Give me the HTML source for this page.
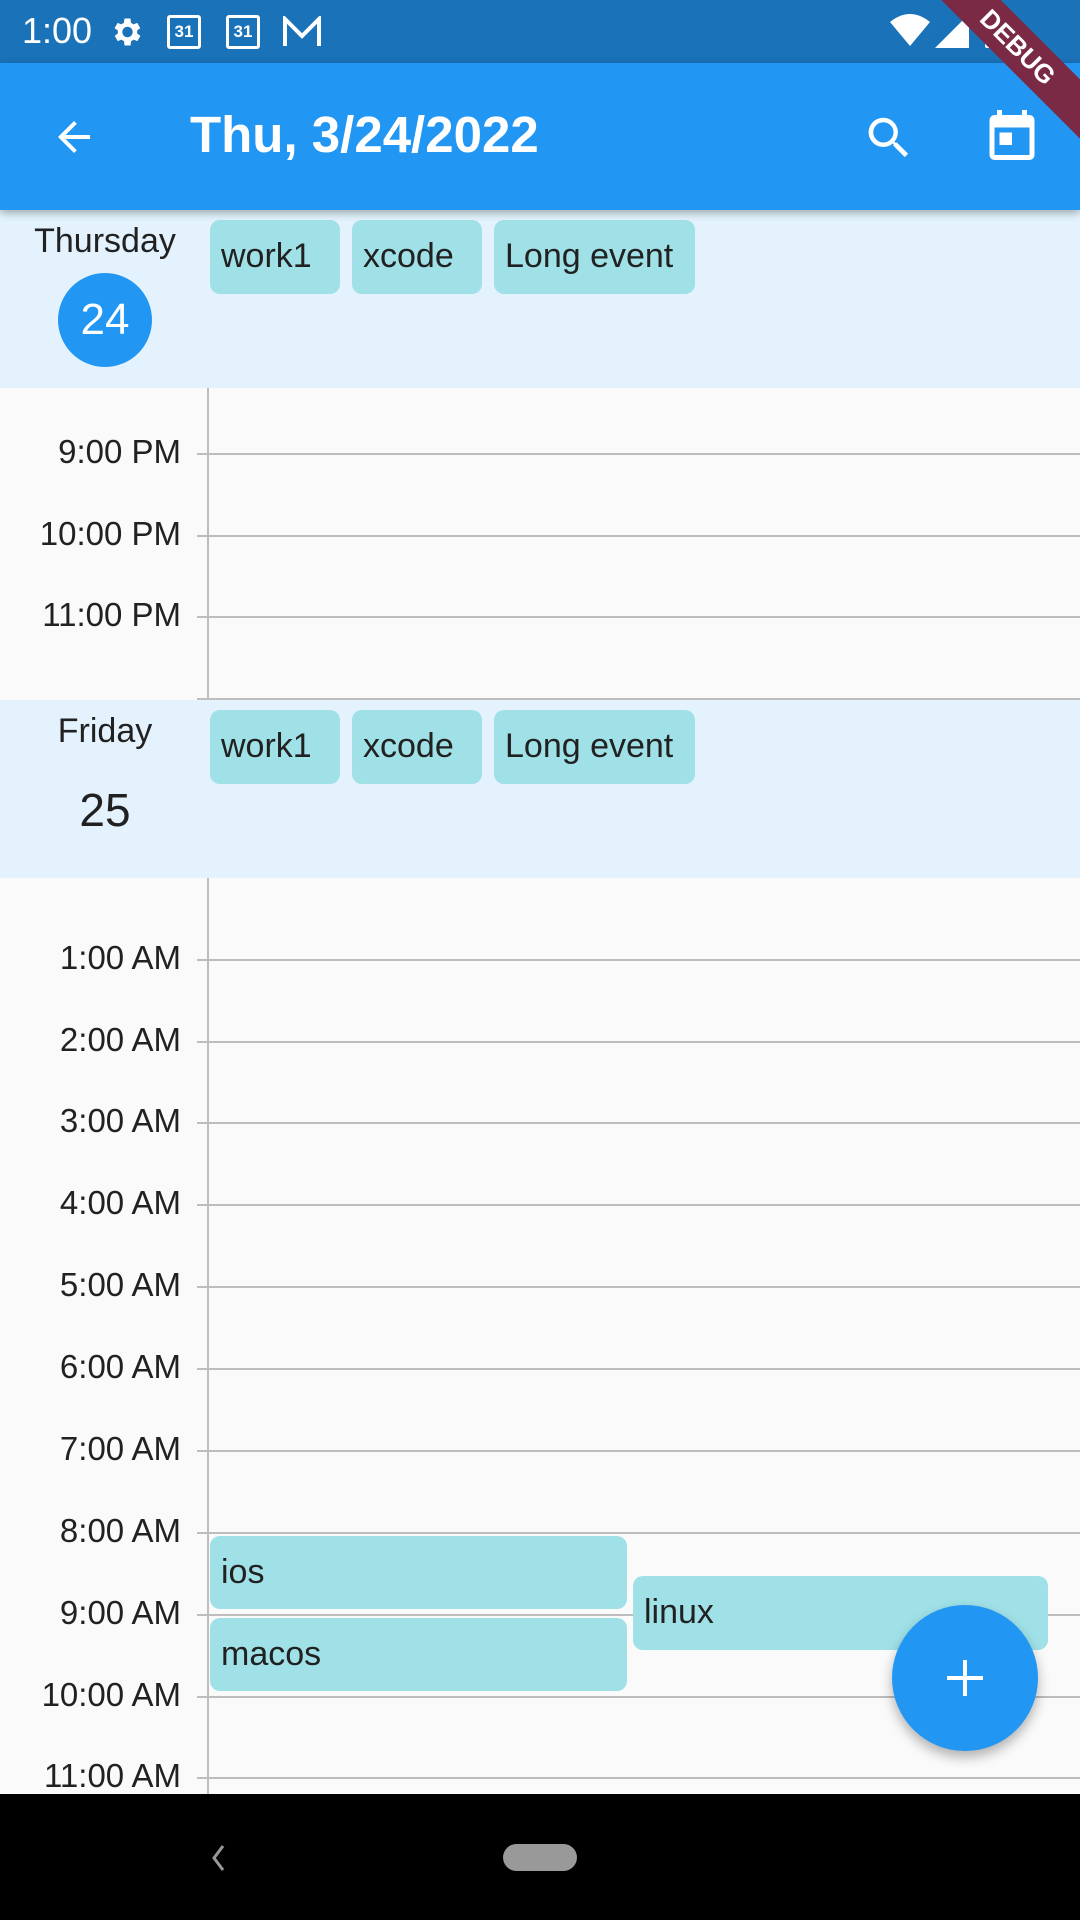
<!DOCTYPE html>
<html><head><meta charset="utf-8"><style>
*{margin:0;padding:0;box-sizing:border-box}
body{width:1080px;height:1920px;overflow:hidden;background:#fafafa;font-family:"Liberation Sans",sans-serif;position:relative;color:#212121}
.abs{position:absolute}
.status{left:0;top:0;width:1080px;height:63px;background:#1a72b9;color:#fff}
.appbar{left:0;top:63px;width:1080px;height:147px;background:#2196f3;box-shadow:0 3px 8px rgba(0,0,0,.3);z-index:2}
.hdr{left:0;width:1080px;background:#e3f2fd}
.chip{position:absolute;background:#a0e1e8;border-radius:10px;font-size:34px;padding-left:11px;line-height:72px}
.t{position:absolute;right:899px;font-size:33px;text-align:right;white-space:nowrap}
.ln{position:absolute;left:197px;width:883px;height:1.5px;background:#bdbdbd}
.vl{position:absolute;left:207px;width:1.5px;background:#bdbdbd}
</style></head><body>
<div class="abs status">
<div class="abs" style="left:22px;top:10px;font-size:36px">1:00</div>
<svg class="abs" style="left:108px;top:14px" width="36" height="36" viewBox="0 0 24 24"><path fill="#fff" d="M19.4 13a7.5 7.5 0 000-2l2.1-1.6-2-3.5-2.5 1a7 7 0 00-1.7-1L15 3h-4l-.4 2.9a7 7 0 00-1.7 1l-2.5-1-2 3.5L6.6 11a7.5 7.5 0 000 2l-2.1 1.6 2 3.5 2.5-1a7 7 0 001.7 1L11 21h4l.4-2.9a7 7 0 001.7-1l2.5 1 2-3.5zM13 15.5A3.5 3.5 0 1113 8.5a3.5 3.5 0 010 7z"/></svg>
<div class="abs" style="left:167px;top:15px;width:34px;height:34px;border:3px solid #fff;border-radius:3px;font-size:17px;text-align:center;line-height:28px;font-weight:bold">31</div>
<div class="abs" style="left:226px;top:15px;width:34px;height:34px;border:3px solid #fff;border-radius:3px;font-size:17px;text-align:center;line-height:28px;font-weight:bold">31</div>
<svg class="abs" style="left:282px;top:16px" width="40" height="32" viewBox="0 0 40 32"><path d="M3 30V3l17 17L37 3v27" fill="none" stroke="#fff" stroke-width="4"/></svg>
<svg class="abs" style="left:890px;top:14px" width="40" height="34" viewBox="0 0 40 34"><path fill="#fff" d="M0 8Q20-8 40 8L20 32z"/></svg>
<svg class="abs" style="left:935px;top:14px" width="34" height="34"><path fill="#fff" d="M34 0V34H0z"/></svg>
<div class="abs" style="left:985px;top:14px;width:20px;height:34px;background:#fff;border-radius:2px"></div>
</div>
<div class="abs" style="right:-68px;top:26px;width:260px;height:42px;background:#7a2a45;transform:rotate(45deg);color:#fff;font-weight:bold;font-size:26px;text-align:center;line-height:42px;z-index:5">DEBUG</div>
<div class="abs appbar">
<svg class="abs" style="left:50px;top:50px" width="48" height="48" viewBox="0 0 24 24"><path fill="#fff" d="M20 11H7.8l5.6-5.6L12 4l-8 8 8 8 1.4-1.4L7.8 13H20z"/></svg>
<div class="abs" style="left:190px;top:42px;font-size:51px;font-weight:bold;color:#fff">Thu, 3/24/2022</div>
<svg class="abs" style="left:862px;top:48px" width="54" height="54" viewBox="0 0 24 24"><path fill="#fff" d="M15.5 14h-.8l-.3-.3A6.5 6.5 0 109.5 16a6.5 6.5 0 004.2-1.6l.3.3v.8l5 5 1.5-1.5zm-6 0A4.5 4.5 0 1114 9.5 4.5 4.5 0 019.5 14z"/></svg>
<svg class="abs" style="left:982px;top:42px" width="60" height="60" viewBox="0 0 24 24"><path fill="#fff" d="M19 4h-1V2h-2v2H8V2H6v2H5a2 2 0 00-2 2v14a2 2 0 002 2h14a2 2 0 002-2V6a2 2 0 00-2-2zm0 16H5V9h14zM7 11h5v5H7z"/></svg>
</div>
<div class="abs hdr" style="top:210px;height:178px">
<div class="abs" style="left:0;width:210px;top:12px;text-align:center;font-size:34px">Thursday</div>
<div class="abs" style="left:58px;top:63px;width:94px;height:94px;border-radius:50%;background:#2196f3;color:#fff;font-size:44px;text-align:center;line-height:94px">24</div>
<div class="chip" style="left:210px;top:10px;width:130px;height:74px">work1</div>
<div class="chip" style="left:352px;top:10px;width:130px;height:74px">xcode</div>
<div class="chip" style="left:494px;top:10px;width:201px;height:74px">Long event</div>
</div>
<div class="vl" style="top:388px;height:311px"></div>
<div class="ln" style="top:453px"></div><div class="t" style="top:433px">9:00 PM</div>
<div class="ln" style="top:535px"></div><div class="t" style="top:515px">10:00 PM</div>
<div class="ln" style="top:616px"></div><div class="t" style="top:596px">11:00 PM</div>
<div class="ln" style="top:698px"></div>
<div class="abs hdr" style="top:700px;height:178px">
<div class="abs" style="left:0;width:210px;top:12px;text-align:center;font-size:34px">Friday</div>
<div class="abs" style="left:58px;top:63px;width:94px;height:94px;text-align:center;font-size:46px;line-height:94px">25</div>
<div class="chip" style="left:210px;top:10px;width:130px;height:74px">work1</div>
<div class="chip" style="left:352px;top:10px;width:130px;height:74px">xcode</div>
<div class="chip" style="left:494px;top:10px;width:201px;height:74px">Long event</div>
</div>
<div class="vl" style="top:878px;height:916px"></div>
<div class="ln" style="top:959px"></div><div class="t" style="top:939px">1:00 AM</div>
<div class="ln" style="top:1041px"></div><div class="t" style="top:1021px">2:00 AM</div>
<div class="ln" style="top:1122px"></div><div class="t" style="top:1102px">3:00 AM</div>
<div class="ln" style="top:1204px"></div><div class="t" style="top:1184px">4:00 AM</div>
<div class="ln" style="top:1286px"></div><div class="t" style="top:1266px">5:00 AM</div>
<div class="ln" style="top:1368px"></div><div class="t" style="top:1348px">6:00 AM</div>
<div class="ln" style="top:1450px"></div><div class="t" style="top:1430px">7:00 AM</div>
<div class="ln" style="top:1532px"></div><div class="t" style="top:1512px">8:00 AM</div>
<div class="ln" style="top:1614px"></div><div class="t" style="top:1594px">9:00 AM</div>
<div class="ln" style="top:1696px"></div><div class="t" style="top:1676px">10:00 AM</div>
<div class="ln" style="top:1777px"></div><div class="t" style="top:1757px">11:00 AM</div>
<div class="chip" style="left:210px;top:1536px;width:417px;height:73px">ios</div>
<div class="chip" style="left:210px;top:1618px;width:417px;height:73px">macos</div>
<div class="chip" style="left:633px;top:1576px;width:415px;height:74px">linux</div>
<div class="abs" style="left:892px;top:1605px;width:146px;height:146px;border-radius:50%;background:#2196f3;box-shadow:0 6px 12px rgba(0,0,0,.3)">
<div class="abs" style="left:55px;top:71px;width:36px;height:4px;background:#fff"></div>
<div class="abs" style="left:71px;top:55px;width:4px;height:36px;background:#fff"></div>
</div>
<div class="abs" style="left:0;top:1794px;width:1080px;height:126px;background:#000">
<svg class="abs" style="left:208px;top:50px" width="20" height="30"><path d="M15 2L6 14l9 12" fill="none" stroke="#999" stroke-width="3"/></svg>
<div class="abs" style="left:503px;top:50px;width:74px;height:27px;border-radius:14px;background:#999"></div>
</div>
</body></html>
